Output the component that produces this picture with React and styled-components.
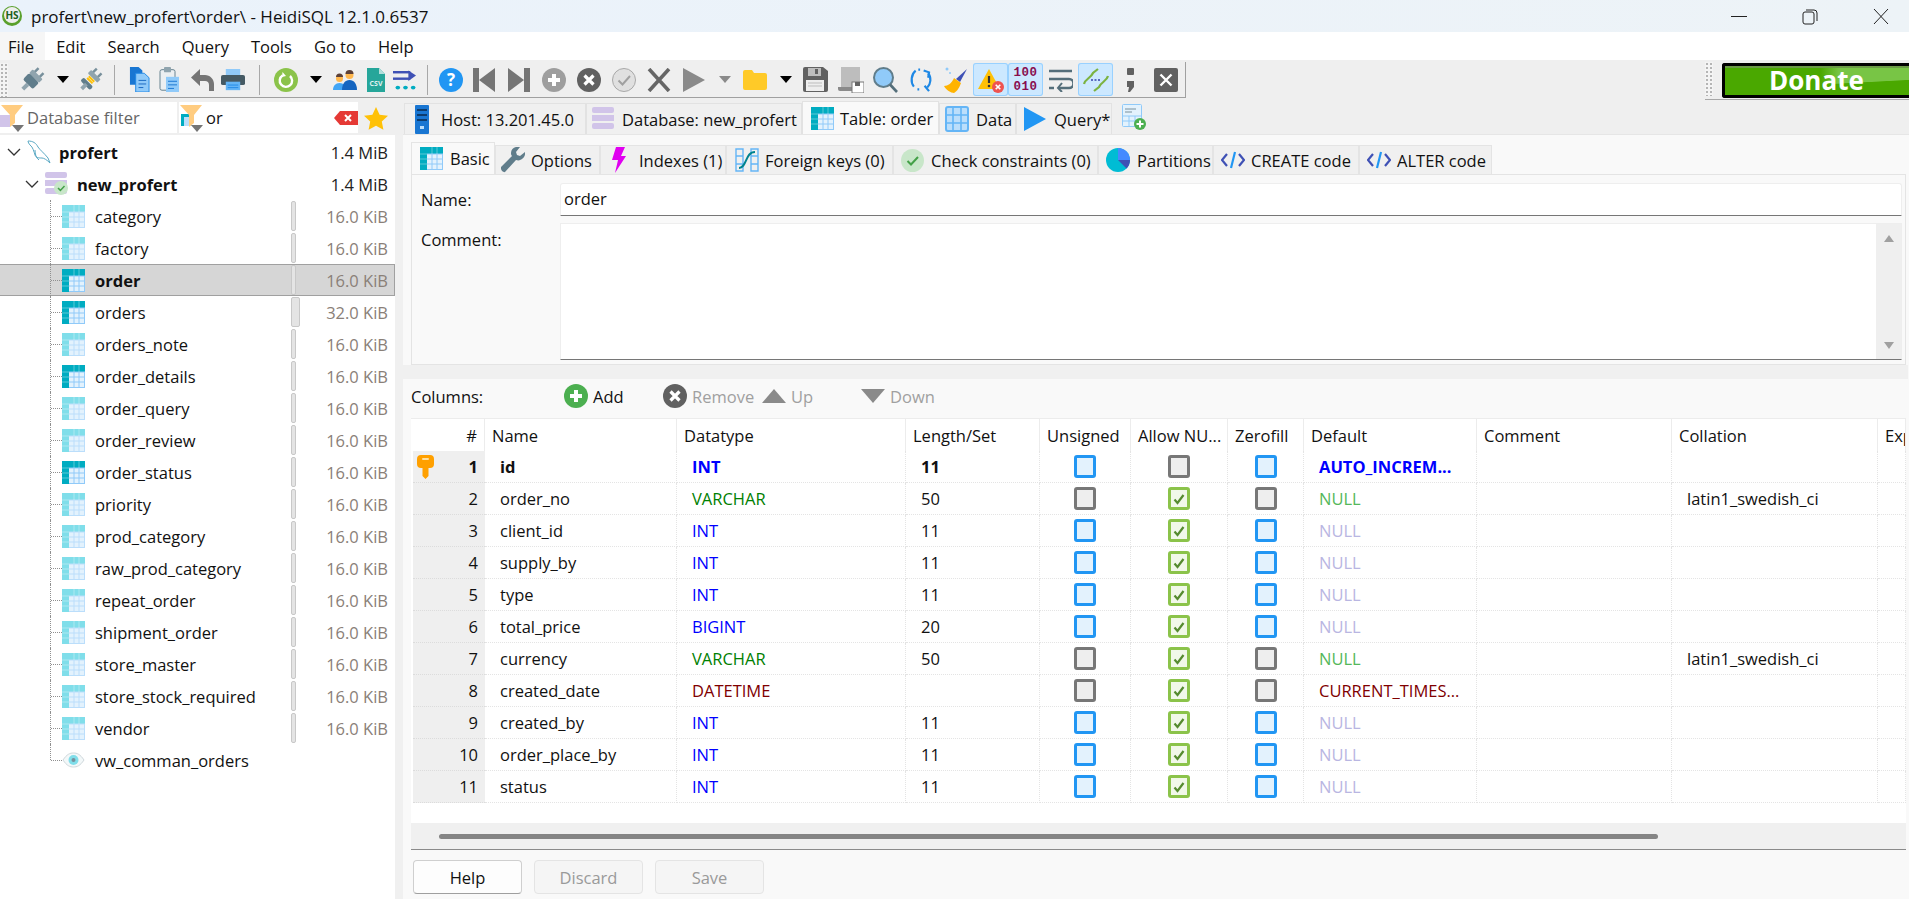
import React from 'react';
import styled, { createGlobalStyle } from 'styled-components';

const FONT = '"Open Sans", "Noto Sans", "Liberation Sans", sans-serif';

const GlobalStyle = createGlobalStyle`
  html, body {
    margin: 0;
    padding: 0;
    background: #f0f0f0;
    overflow: hidden;
  }
  * {
    box-sizing: border-box;
  }
`;

const Window = styled.div`
  width: 1909px;
  height: 899px;
  display: flex;
  flex-direction: column;
  overflow: hidden;
  font-family: ${FONT};
  font-size: 16.5px;
  color: #111;
`;

const TitleBar = styled.div`
  height: 32px;
  flex: none;
  display: flex;
  align-items: center;
  padding-left: 2px;
  gap: 9px;
  background: linear-gradient(90deg, #eaf2fb, #edf3f7);
  font-size: 17px;
`;

const TitleText = styled.span`
  flex: 1;
`;

const WinButtons = styled.div`
  display: flex;
  align-items: center;
  gap: 55px;
  padding-right: 20px;
`;

const MenuBar = styled.div`
  height: 28px;
  flex: none;
  display: flex;
  background: #fff;
`;

const MenuItem = styled.div`
  padding: 0 11px 0 ${p => (p.$first ? '8px' : '11px')};
  display: flex;
  align-items: center;
  background: ${p => (p.$first ? '#f6f6f6' : 'transparent')};
`;

const ToolArea = styled.div`
  height: 40px;
  flex: none;
  display: flex;
  justify-content: space-between;
  padding-top: 2px;
  background: #efefef;
`;

const ToolBar = styled.div`
  width: 1186px;
  height: 36px;
  display: flex;
  align-items: center;
  border-right: 1px solid #a0a0a0;
  border-bottom: 1px solid #a0a0a0;
`;

const Grip = styled.div`
  width: ${p => p.$w || 16}px;
  height: 34px;
  flex: none;
  background-color: #f4f4f4;
  background-image: radial-gradient(#b5b5b5 0.8px, transparent 1px);
  background-size: 4px 4px;
  background-repeat: repeat;
  background-clip: content-box;
  padding-right: ${p => (p.$w ? 9 : 8)}px;
`;

const ToolButton = styled.div`
  width: ${p => p.$w || 35}px;
  height: 33px;
  flex: none;
  display: flex;
  align-items: center;
  justify-content: center;
  border-radius: 3px;
  background: ${p => (p.$active ? '#cce8ff' : 'transparent')};
  box-shadow: ${p => (p.$active ? 'inset 0 0 0 1px #99d1ff' : 'none')};
`;

const ToolSep = styled.div`
  width: ${p => p.$w}px;
  height: 30px;
  flex: none;
  display: flex;
  justify-content: center;
  &::after {
    content: '';
    width: 1px;
    background: #a8a8a8;
  }
`;

const DropArrow = styled.div`
  width: 0;
  height: 0;
  border-left: 6px solid transparent;
  border-right: 6px solid transparent;
  border-top: 7px solid ${p => p.$color || '#000'};
`;

const DonateWrap = styled.div`
  width: 204px;
  height: 38px;
  display: flex;
  border-bottom: 1px solid #a8a8a8;
`;

const DonateButton = styled.div`
  flex: 1;
  height: 35px;
  margin-top: 1px;
  border: 3px solid #000;
  border-right: none;
  border-radius: 3px 0 0 3px;
  display: flex;
  align-items: center;
  padding: 0 0 2px 44px;
  color: #fff;
  font-size: 26px;
  font-weight: 700;
  background:
    linear-gradient(177deg, transparent 60%, #4aa800 62%),
    linear-gradient(90deg, #4aa800 52%, #78c545 62%);
  box-shadow: inset 0 2px 0 #6a9a45;
`;

const Body = styled.div`
  flex: 1;
  display: flex;
  min-height: 0;
`;

const LeftPane = styled.div`
  width: 403px;
  flex: none;
  display: flex;
  flex-direction: column;
`;

const FilterBar = styled.div`
  height: 35px;
  flex: none;
  display: flex;
  gap: 2px;
  padding-top: 2px;
  background: #efefef;
`;

const FilterField = styled.div`
  width: ${p => p.$w}px;
  height: 31px;
  flex: none;
  display: flex;
  align-items: center;
  background: #fff;
  color: ${p => (p.$muted ? '#666' : '#111')};
`;

const FilterIcon = styled.div`
  width: 27px;
  flex: none;
  display: flex;
`;

const FilterText = styled.span`
  flex: 1;
`;

const StarBox = styled.div`
  width: 32px;
  display: flex;
  align-items: center;
  justify-content: center;
`;

const TreeWrap = styled.div`
  flex: 1;
  display: flex;
  background: #fff;
  min-height: 0;
`;

const Tree = styled.div`
  width: 395px;
  flex: none;
  padding-top: 1px;
`;

const TreeStrip = styled.div`
  flex: 1;
  background: #f0f0f0;
`;

const TreeRow = styled.div`
  position: relative;
  height: 32px;
  display: flex;
  align-items: center;
  padding-left: ${p => p.$indent}px;
  padding-right: 7px;
  font-weight: ${p => (p.$bold ? 700 : 400)};
  background: ${p => (p.$selected ? '#d6d6d6' : 'transparent')};
  box-shadow: ${p => (p.$selected ? 'inset 0 1px #a0a0a0, inset 0 -1px #a0a0a0, inset -1px 0 #a0a0a0' : 'none')};

  /* dotted connector of the tree */
  ${p => p.$leaf && `
    &::before {
      content: '';
      position: absolute;
      left: 50px;
      top: 0;
      height: ${p.$last ? '16px' : '32px'};
      width: 12px;
      border-left: 1px dotted #909090;
    }
    &::after {
      content: '';
      position: absolute;
      left: 51px;
      top: 16px;
      width: 11px;
      border-top: 1px dotted #909090;
    }
  `}
`;

const Chevron = styled.svg`
  width: 14px;
  height: 14px;
  flex: none;
  margin-right: 6px;
`;

const TreeIcon = styled.div`
  width: ${p => p.$w || 23}px;
  height: 24px;
  flex: none;
  display: flex;
  align-items: center;
  margin-right: ${p => p.$mr || 10}px;
`;

const TreeName = styled.span`
  flex: 1;
`;

const SizeBar = styled.div`
  width: ${p => (p.$wide ? 9 : 5)}px;
  height: 30px;
  flex: none;
  margin-right: ${p => (p.$wide ? 0 : 4)}px;
  border-radius: 2px;
  background: #e4e4e4;
  border: 1px solid #c8c8c8;
`;

const TreeSize = styled.span`
  width: 88px;
  flex: none;
  text-align: right;
  font-weight: 400;
  color: ${p => (p.$dark ? '#222' : '#8a8078')};
`;

const RightPane = styled.div`
  flex: 1;
  display: flex;
  flex-direction: column;
  min-width: 0;
`;

const MainTabs = styled.div`
  height: 35px;
  flex: none;
  display: flex;
  align-items: flex-end;
  padding-left: 1px;
  background: #efefef;
  border-bottom: 1px solid #e6e6e6;
`;

const MainTab = styled.div`
  width: ${p => p.$w}px;
  height: ${p => (p.$active ? 33 : 31)}px;
  flex: none;
  display: flex;
  align-items: center;
  gap: ${p => p.$gap || 6}px;
  padding-left: ${p => p.$pl || 8}px;
  background: ${p => (p.$active ? '#f9f9f9' : '#f0f0f0')};
  border: 1px solid #e2e2e2;
  border-bottom: none;
  white-space: nowrap;
`;

const AddTab = styled.div`
  margin: 0 0 4px 10px;
  display: flex;
`;

const Content = styled.div`
  flex: 1;
  display: flex;
  flex-direction: column;
  min-height: 0;
  padding: 0 3px 0 8px;
  background: #f9f9f9;
`;

const SubTabs = styled.div`
  height: 39px;
  flex: none;
  display: flex;
  align-items: flex-end;
  padding-top: 7px;
`;

const SubTab = styled.div`
  width: ${p => p.$w}px;
  height: ${p => (p.$active ? 32 : 29)}px;
  flex: none;
  display: flex;
  align-items: center;
  gap: ${p => p.$gap || 6}px;
  padding-left: ${p => p.$pl || 7}px;
  background: ${p => (p.$active ? '#f9f9f9' : '#f0f0f0')};
  border: 1px solid #e4e4e4;
  border-bottom: none;
  white-space: nowrap;
`;

const TabPage = styled.div`
  height: 191px;
  flex: none;
  padding: 8px 3px 0 9px;
  border: 1px solid #e4e4e4;
  display: flex;
  flex-direction: column;
  gap: 7px;
`;

const FormRow = styled.div`
  display: flex;
`;

const FormLabel = styled.label`
  width: 139px;
  flex: none;
  padding-top: ${p => p.$pt || 5}px;
`;

const NameInput = styled.div`
  flex: 1;
  height: 33px;
  padding: 3px 3px;
  background: #fff;
  border: 1px solid #eeeeee;
  border-bottom: 1px solid #767676;
  border-radius: 3px 3px 0 0;
`;

const Memo = styled.div`
  flex: 1;
  height: 137px;
  display: flex;
  justify-content: flex-end;
  background: #fff;
  border: 1px solid #eeeeee;
  border-bottom: 1px solid #767676;
`;

const MemoScroll = styled.div`
  width: 25px;
  display: flex;
  flex-direction: column;
  justify-content: space-between;
  align-items: center;
  padding: 11px 0 10px;
  background: #efefef;
`;

const Arrow = styled.div`
  width: 0;
  height: 0;
  border-left: ${p => p.$s || 6}px solid transparent;
  border-right: ${p => p.$s || 6}px solid transparent;
  ${p => (p.$up ? 'border-bottom' : 'border-top')}: ${p => p.$h || 8}px solid ${p => p.$color || '#a0a0a0'};
`;

const Splitter = styled.div`
  height: 14px;
  flex: none;
  margin: 0 -2px 0 -8px;
  background: #f0f0f0;
`;

const ColumnsBar = styled.div`
  height: 39px;
  flex: none;
  display: flex;
  align-items: center;
  padding-bottom: 5px;
`;

const ColumnsLabel = styled.span`
  width: 153px;
  flex: none;
`;

const ColAction = styled.div`
  width: ${p => p.$w}px;
  flex: none;
  display: flex;
  align-items: center;
  gap: 5px;
  color: ${p => (p.$off ? '#a0a0a0' : '#111')};
`;

const Grid = styled.div`
  height: 432px;
  flex: none;
  display: flex;
  flex-direction: column;
  overflow: hidden;
  background: #fff;
  border-top: 1px solid #ececec;
`;

const COLS = '74px 192px 229px 134px 91px 97px 76px 173px 195px 206px 28px';

const HeadRow = styled.div`
  height: 32px;
  flex: none;
  display: grid;
  grid-template-columns: ${COLS};
`;

const HeadCell = styled.div`
  display: flex;
  align-items: center;
  justify-content: ${p => (p.$end ? 'flex-end' : 'flex-start')};
  padding: 0 ${p => (p.$end ? '7px' : '0')} 0 ${p => (p.$end ? '0' : '7px')};
  border-right: 1px solid #ececec;
  white-space: nowrap;
  overflow: hidden;
`;

const DataRow = styled.div`
  height: 32px;
  flex: none;
  display: grid;
  grid-template-columns: ${COLS};
  font-weight: ${p => (p.$bold ? 700 : 400)};
`;

const Gutter = styled.div`
  position: relative;
  display: flex;
  align-items: center;
  justify-content: flex-end;
  padding-right: 7px;
  margin-left: 2px;
  background: #efefef;
  border-bottom: 1px dotted #dcdcdc;
`;

const KeyBadge = styled.div`
  position: absolute;
  left: 4px;
  top: 4px;
  display: flex;
`;

const Cell = styled.div`
  display: flex;
  align-items: center;
  justify-content: ${p => (p.$center ? 'center' : 'flex-start')};
  padding-left: ${p => (p.$center ? 0 : 15)}px;
  color: ${p => p.$color || 'inherit'};
  border-right: 1px dotted #e4e4e4;
  border-bottom: 1px dotted #e4e4e4;
  white-space: nowrap;
`;

const CheckBox = styled.div`
  width: 22px;
  height: 23px;
  display: flex;
  align-items: center;
  justify-content: center;
  border-radius: 3px;
  border: 3px solid ${p => ({ blue: '#2196f3', gray: '#777', green: '#8bc34a' }[p.$tone])};
  background: ${p => ({ blue: '#e3f2fd', gray: '#eeeeee', green: '#f1f8e9' }[p.$tone])};
`;

const HScroll = styled.div`
  height: 27px;
  flex: none;
  margin-top: auto;
  display: flex;
  align-items: center;
  padding-left: 28px;
  background: #f0f0f0;
  border-bottom: 1px solid #8a8a8a;
`;

const HThumb = styled.div`
  width: 1219px;
  height: 5px;
  border-radius: 3px;
  background: #858585;
`;

const Footer = styled.div`
  flex: 1;
  display: flex;
  gap: 12px;
  padding: 10px 0 0 2px;
`;

const FootButton = styled.div`
  width: 109px;
  height: 34px;
  display: flex;
  align-items: center;
  justify-content: center;
  border-radius: 4px;
  background: ${p => (p.$off ? '#f5f5f5' : '#fdfdfd')};
  border: 1px solid ${p => (p.$off ? '#e4e4e4' : '#cfcfcf')};
  border-bottom-color: ${p => (p.$off ? '#e4e4e4' : '#9f9f9f')};
  color: ${p => (p.$off ? '#9a9a9a' : '#111')};
`;

/* ---------- icons ---------- */

function TableIcon({ tone = 'dark', size = 23 }) {
  const head = tone === 'dark' ? '#00acc1' : '#80deea';
  const line = tone === 'dark' ? '#90caf9' : '#bbdefb';
  return (
    <svg width={size} height={size} viewBox="0 0 23 23">
      <rect x="0.5" y="0.5" width="22" height="22" fill="#e3f2fd" stroke={line} />
      <rect x="0" y="0" width="23" height="7" fill={head} />
      <rect x="0" y="0" width="7" height="23" fill={head} />
      <path d="M7 7H23M7 12H23M7 17H23M12 7V23M17 7V23" stroke={line} strokeWidth="1" fill="none" />
      <path d="M0 7H7M0 12H7M0 17H7M12 0V7M17 0V7" stroke="#ffffff" strokeOpacity="0.35" strokeWidth="1" />
    </svg>
  );
}

function DataIcon() {
  return (
    <svg width="24" height="26" viewBox="0 0 24 26">
      <rect x="1" y="1" width="22" height="24" rx="2" fill="#bbdefb" stroke="#64b5f6" strokeWidth="2" />
      <path d="M1 9H23M1 17H23M8 1V25M16 1V25" stroke="#64b5f6" strokeWidth="1.6" />
    </svg>
  );
}

function Play({ color = '#2196f3', w = 24, h = 26 }) {
  return (
    <svg width={w} height={h} viewBox="0 0 24 26">
      <path d="M1 1L23 13L1 25Z" fill={color} />
    </svg>
  );
}

function HostIcon() {
  return (
    <svg width="14" height="29" viewBox="0 0 14 29">
      <rect width="14" height="29" rx="1" fill="#1976d2" />
      <path d="M2 5H12M2 10H12M2 15H12" stroke="#0d3c6e" strokeWidth="2" />
      <rect x="5" y="21" width="4" height="3" fill="#bbdefb" />
    </svg>
  );
}

function DbIcon({ ok }) {
  return (
    <svg width="24" height="24" viewBox="0 0 24 24">
      <rect x="0" y="0" width="22" height="6" rx="2" fill="#d1c4e9" />
      <rect x="0" y="8" width="22" height="6" fill="#d1c4e9" />
      <rect x="0" y="16" width="22" height="6" rx="2" fill="#d1c4e9" />
      {ok && <circle cx="16" cy="16" r="7" fill="#c8e6c9" />}
      {ok && <path d="M13 16l2.4 2.4L19.5 14" stroke="#43a047" strokeWidth="1.5" fill="none" />}
    </svg>
  );
}

function Dolphin() {
  return (
    <svg width="24" height="24" viewBox="0 0 24 24" fill="none" stroke="#5aa9c4" strokeWidth="1">
      <path d="M1 1c5 0 8 2 10 6 2 3 6 6 10 11l2 5c-3-3-6-5-8-5-3 0-6 0-7-3C7 12 6 7 3 5 2 4 1 2 1 1z" />
      <path d="M8 10c0 4 1 8 4 10" />
    </svg>
  );
}

function EyeIcon() {
  return (
    <svg width="23" height="16" viewBox="0 0 23 16">
      <path d="M1 8C5 2 8 1 11.5 1S18 2 22 8c-4 6-7 7-10.5 7S5 14 1 8z" fill="#f3f8f9" stroke="#cfd8dc" />
      <circle cx="11.5" cy="8" r="5" fill="#80deea" />
      <circle cx="11.5" cy="8" r="2" fill="#78909c" />
    </svg>
  );
}

function Key() {
  return (
    <svg width="17" height="24" viewBox="0 0 17 24">
      <path d="M4 0H13a4 4 0 0 1 4 4V9a4 4 0 0 1-4 4H11.5V21L8.5 24 5.5 21V13H4A4 4 0 0 1 0 9V4a4 4 0 0 1 4-4z" fill="#ffa000" />
      <rect x="5" y="3" width="7" height="2" rx="1" fill="#ffe0a0" />
    </svg>
  );
}

function Funnel({ inner }) {
  return (
    <svg width="27" height="28" viewBox="0 0 27 28">
      {inner === 'db' && <rect x="0" y="11" width="10" height="12" fill="#d1c4e9" />}
      {inner === 'table' && <g><rect x="2" y="10" width="11" height="12" fill="#bbdefb" /><rect x="2" y="10" width="11" height="3" fill="#00acc1" /><rect x="2" y="10" width="3" height="12" fill="#00acc1" /></g>}
      <path d="M1 1H23L15 11V19L10 23V11Z" fill="#ffcc80" />
      <path d="M12 21H24L18 28Z" fill="#757575" />
    </svg>
  );
}

function CircleIcon({ color, kind, size = 24 }) {
  return (
    <svg width={size} height={size} viewBox="0 0 24 24">
      <circle cx="12" cy="12" r="12" fill={color} />
      {kind === 'plus' && <path d="M12 6v12M6 12h12" stroke="#fff" strokeWidth="4" />}
      {kind === 'x' && <path d="M7.5 7.5l9 9M16.5 7.5l-9 9" stroke="#fff" strokeWidth="3.2" />}
    </svg>
  );
}

function PlugIcon({ accent }) {
  return (
    <svg width="26" height="26" viewBox="0 0 26 26">
      <g transform="rotate(45 13 13)">
        <rect x="8" y="0" width="2.5" height="6" fill="#78909c" />
        <rect x="15" y="0" width="2.5" height="6" fill="#78909c" />
        <rect x="6" y="5" width="14" height="5" rx="1" fill="#90a4ae" />
        {accent && <path d="M9 11.5h8M9 14h8" stroke="#ffc107" strokeWidth="2" />}
        <rect x="6" y={accent ? 16 : 10} width="14" height={accent ? 5 : 9} rx="2" fill="#607d8b" />
        <rect x="11" y="19" width="4" height="7" fill="#90a4ae" />
      </g>
    </svg>
  );
}

function DocsIcon() {
  return (
    <svg width="21" height="25" viewBox="0 0 22 28" preserveAspectRatio="none">
      <path d="M1 0H10L14 4V20H1Z" fill="#1976d2" />
      <path d="M7 7H16L21 12V28H7Z" fill="#90caf9" stroke="#1e88e5" />
      <path d="M10 15H18M10 19H18M10 23H15" stroke="#1565c0" />
    </svg>
  );
}

function PasteIcon() {
  return (
    <svg width="20" height="25" viewBox="0 0 20 28" preserveAspectRatio="none">
      <rect x="1" y="3" width="15" height="23" rx="2" fill="#eceff1" stroke="#607d8b" />
      <rect x="5" y="0" width="7" height="6" rx="1" fill="#90a4ae" />
      <rect x="7" y="11" width="13" height="17" fill="#90caf9" />
      <path d="M9 16H18M9 20H18M9 24H15" stroke="#1976d2" />
    </svg>
  );
}

function UndoIcon() {
  return (
    <svg width="24" height="24" viewBox="0 0 24 24">
      <path d="M10 1L1 9.5 10 18V13H15C17.5 13 19 14.5 19 17V23H24V16C24 11 20 7 15 7H10Z" fill="#757575" />
    </svg>
  );
}

function PrintIcon() {
  return (
    <svg width="24" height="22" viewBox="0 0 25 26" preserveAspectRatio="none">
      <rect x="5" y="0" width="15" height="8" fill="#90caf9" />
      <rect x="0" y="7" width="25" height="12" rx="2" fill="#455a64" />
      <rect x="5" y="15" width="15" height="10" fill="#64b5f6" />
      <path d="M7 19H18M7 22H18" stroke="#1e88e5" />
    </svg>
  );
}

function RefreshIcon() {
  return (
    <svg width="24" height="24" viewBox="0 0 24 24">
      <circle cx="12" cy="12" r="12" fill="#8bc34a" />
      <path d="M8.5 7.5A6.2 6.2 0 1 0 16 8" stroke="#fff" strokeWidth="2.4" fill="none" />
      <path d="M12 8l-4 1 .5-5z" fill="#fff" />
    </svg>
  );
}

function UsersIcon() {
  return (
    <svg width="24" height="20" viewBox="0 0 24 20">
      <circle cx="6.5" cy="8.5" r="3.5" fill="#ffb74d" />
      <path d="M3 7a3.5 3.5 0 0 1 7 0z" fill="#5d4037" />
      <path d="M0 20c0-4 2.5-7 6.5-7s6.5 3 6.5 7z" fill="#42a5f5" />
      <circle cx="16.5" cy="5" r="4" fill="#ffb74d" />
      <path d="M12.5 4a4 4 0 0 1 8 0z" fill="#5d4037" />
      <path d="M9 20c0-6 3-10 7.5-10S24 14 24 20z" fill="#1565c0" />
    </svg>
  );
}

function CsvIcon() {
  return (
    <svg width="18" height="24" viewBox="0 0 18 24">
      <path d="M0 0H12L18 6V24H0Z" fill="#26a69a" />
      <path d="M12 0L18 6H12Z" fill="#b2dfdb" />
      <text x="9" y="18" fontSize="7" fontWeight="700" fontFamily={FONT} textAnchor="middle" fill="#e0f2f1">CSV</text>
    </svg>
  );
}

function ExportIcon() {
  return (
    <svg width="24" height="21" viewBox="0 0 25 26" preserveAspectRatio="none">
      <path d="M0 4H18" stroke="#3f51b5" strokeWidth="3" />
      <path d="M0 12H18" stroke="#3f51b5" strokeWidth="3" />
      <path d="M16 2L24 8 16 15Z" fill="#3f51b5" />
      <circle cx="5" cy="23" r="2.4" fill="#00acc1" />
      <circle cx="13" cy="23" r="2.4" fill="#00acc1" />
      <circle cx="21" cy="23" r="2.4" fill="#00acc1" />
    </svg>
  );
}

function HelpIcon() {
  return (
    <svg width="24" height="24" viewBox="0 0 24 24">
      <circle cx="12" cy="12" r="12" fill="#2196f3" />
      <text x="12" y="18" fontSize="17" fontWeight="700" fontFamily={FONT} textAnchor="middle" fill="#fff">?</text>
    </svg>
  );
}

function SkipIcon({ last }) {
  return (
    <svg width="22" height="24" viewBox="0 0 22 24">
      {last
        ? <path d="M0 0L16 12 0 24ZM16 0H22V24H16Z" fill="#757575" />
        : <path d="M0 0H6V24H0ZM22 0V24L6 12Z" fill="#757575" />}
    </svg>
  );
}

function CheckDisc() {
  return (
    <svg width="24" height="24" viewBox="0 0 24 24">
      <circle cx="12" cy="12" r="11.5" fill="#e0e0e0" stroke="#a8a8a8" />
      <path d="M6.5 12.5l4 4L18 8" stroke="#a0a0a0" strokeWidth="2" fill="none" />
    </svg>
  );
}

function BigX() {
  return (
    <svg width="24" height="24" viewBox="0 0 24 24">
      <path d="M2 1l20 22M22 1L2 23" stroke="#666" strokeWidth="3.6" />
    </svg>
  );
}

function FolderIcon() {
  return (
    <svg width="24" height="20" viewBox="0 0 24 20">
      <path d="M2 0H9L11 3H22a2 2 0 0 1 2 2V18a2 2 0 0 1-2 2H2a2 2 0 0 1-2-2V2a2 2 0 0 1 2-2z" fill="#ffca28" />
    </svg>
  );
}

function SaveIcon() {
  return (
    <svg width="25" height="25" viewBox="0 0 25 25">
      <path d="M2 0H20L25 4V23a2 2 0 0 1-2 2H2a2 2 0 0 1-2-2V2a2 2 0 0 1 2-2z" fill="#616161" />
      <rect x="5" y="1" width="13" height="8" fill="#bdbdbd" />
      <rect x="12" y="2" width="3" height="5" fill="#616161" />
      <rect x="3" y="13" width="18" height="11" fill="#eeeeee" />
      <path d="M5 16H19M5 19H19" stroke="#bdbdbd" />
    </svg>
  );
}

function SaveFileIcon() {
  return (
    <svg width="26" height="26" viewBox="0 0 26 26">
      <rect x="3" y="0" width="19" height="20" fill="#bdbdbd" />
      <path d="M0 20H14V24H2a2 2 0 0 1-2-2z" fill="#8a8a8a" />
      <rect x="14" y="15" width="12" height="11" fill="#fff" stroke="#777" />
      <rect x="17" y="15" width="5" height="4" fill="#666" />
    </svg>
  );
}

function SearchIcon() {
  return (
    <svg width="25" height="26" viewBox="0 0 25 26">
      <circle cx="10.5" cy="10.5" r="9.5" fill="#90caf9" stroke="#607d8b" strokeWidth="2" />
      <path d="M17 17.5L24 25" stroke="#546e7a" strokeWidth="2.6" />
    </svg>
  );
}

function ReplaceIcon() {
  return (
    <svg width="24" height="25" viewBox="0 0 24 28" fill="none" stroke="#1e88e5" strokeWidth="2.4">
      <path d="M6 4C1 8 0 17 4 22" />
      <path d="M8 25h3M9 3h3" strokeDasharray="2 1.5" />
      <path d="M15 4l6 2-1 6" />
      <path d="M20 7c4 5 3 12-1 16" />
      <path d="M16 21l5 6" />
    </svg>
  );
}

function BroomIcon() {
  return (
    <svg width="26" height="28" viewBox="0 0 26 28">
      <path d="M24 3L17 16l-4-3z" fill="#3f51b5" />
      <path d="M11 12l7 5c-2 6-5 9-7 10-3 0-8-3-10-7 4 0 8-3 10-8z" fill="#ffb300" />
      <circle cx="4" cy="3" r="1.5" fill="#90caf9" />
      <circle cx="7" cy="7" r="1" fill="#90caf9" />
    </svg>
  );
}

function WarnIcon() {
  return (
    <svg width="26" height="26" viewBox="0 0 26 26">
      <path d="M11 2L22 22H0Z" fill="#ffc107" />
      <path d="M11 9v7" stroke="#333" strokeWidth="2.2" />
      <circle cx="11" cy="19" r="1.3" fill="#333" />
      <circle cx="20" cy="20" r="6" fill="#ef5350" />
      <path d="M17.7 17.7l4.6 4.6M22.3 17.7l-4.6 4.6" stroke="#fff" strokeWidth="1.6" />
    </svg>
  );
}

const BinaryBox = styled.div`
  font-family: "Liberation Mono", monospace;
  font-size: 12.5px;
  font-weight: 700;
  line-height: 14px;
  letter-spacing: 0.5px;
  text-align: center;
  color: #880e4f;
`;

function WrapIcon() {
  return (
    <svg width="24" height="24" viewBox="0 0 24 24" fill="none" stroke="#546e7a" strokeWidth="2.6">
      <path d="M0 3H23M0 11H20a3 3 0 0 1 0 9H10M0 20H5" />
      <path d="M13 15l-4 5 4 4" strokeWidth="2" />
    </svg>
  );
}

function SyncIcon() {
  return (
    <svg width="26" height="26" viewBox="0 0 26 26" fill="none">
      <path d="M1 17C2 12 8 11 10 6L15 2" stroke="#7cb342" strokeWidth="2.2" />
      <path d="M25 9C24 14 18 15 16 20L11 24" stroke="#7cb342" strokeWidth="2.2" />
      <path d="M8 13h10" stroke="#5c6bc0" strokeWidth="2.2" strokeDasharray="2 1.5" />
    </svg>
  );
}

function SemiIcon() {
  return (
    <svg width="9" height="24" viewBox="0 0 9 24">
      <rect x="1" y="0" width="7" height="7" rx="1" fill="#616161" />
      <path d="M1 13H8V19L4 24H2L3 19H1Z" fill="#616161" />
    </svg>
  );
}

function BoxX() {
  return (
    <svg width="24" height="24" viewBox="0 0 24 24">
      <rect width="24" height="24" rx="2" fill="#616161" />
      <path d="M6.5 6.5l11 11M17.5 6.5l-11 11" stroke="#fff" strokeWidth="2.4" />
    </svg>
  );
}

function WrenchIcon() {
  return (
    <svg width="24" height="26" viewBox="0 0 24 26">
      <path d="M24 5l-5 4-3-1-1-3 4-5c-4-1-9 1-9 6 0 1 0 2 1 3L0 20c-1 2 2 6 4 5L15 13c5 2 10-3 9-8z" fill="#607d8b" />
    </svg>
  );
}

function BoltIcon() {
  return (
    <svg width="14" height="26" viewBox="0 0 14 26">
      <path d="M4 0H13L9 9H14L3 26 6 13H0Z" fill="#e000f0" />
    </svg>
  );
}

function ForeignIcon() {
  return (
    <svg width="24" height="24" viewBox="0 0 24 24" fill="none">
      <path d="M1 1H8V23H1ZM16 1H23V23H16ZM1 8H8M1 16H8M16 8H23M16 16H23" stroke="#64b5f6" strokeWidth="1.4" />
      <path d="M4 20C12 20 10 4 20 4" stroke="#00838f" strokeWidth="2" />
    </svg>
  );
}

function CheckCircle() {
  return (
    <svg width="23" height="23" viewBox="0 0 23 23">
      <circle cx="11.5" cy="11.5" r="11.5" fill="#c8e6c9" />
      <path d="M6.5 12l3.5 3.5 7-7.5" stroke="#43a047" strokeWidth="2" fill="none" />
    </svg>
  );
}

function PieIcon() {
  return (
    <svg width="24" height="24" viewBox="0 0 24 24">
      <circle cx="12" cy="12" r="12" fill="#00bcd4" />
      <path d="M12 12V0A12 12 0 0 1 24 12Z" fill="#448aff" />
      <path d="M12 12H24A12 12 0 0 1 20.5 20.5Z" fill="#3f51b5" />
    </svg>
  );
}

function CodeIcon() {
  return (
    <svg width="24" height="20" viewBox="0 0 24 20" fill="none" strokeWidth="2.2">
      <path d="M6 4L1 10l5 6M18 4l5 6-5 6" stroke="#3f51b5" />
      <path d="M14 2L10 18" stroke="#2196f3" />
    </svg>
  );
}

function NewQueryIcon() {
  return (
    <svg width="24" height="26" viewBox="0 0 24 26">
      <rect x="0.5" y="0.5" width="19" height="22" rx="1" fill="#e3f2fd" stroke="#90caf9" />
      <path d="M3 5H14M3 8H10" stroke="#78909c" />
      <path d="M0 12H20M0 17H20M7 12V23M13 12V23" stroke="#90caf9" />
      <circle cx="18" cy="20" r="6" fill="#4caf50" />
      <path d="M18 16.5v7M14.5 20h7" stroke="#fff" strokeWidth="2" />
    </svg>
  );
}

function TreeChevron() {
  return (
    <Chevron viewBox="0 0 14 14">
      <path d="M1 4l6 6 6-6" stroke="#333" strokeWidth="1.3" fill="none" />
    </Chevron>
  );
}

const TOOLS = [
  { w: 32, icon: <PlugIcon /> },
  { w: 30, icon: <DropArrow /> },
  { w: 25, icon: <PlugIcon accent /> },
  { sep: 22 },
  { w: 28, icon: <DocsIcon /> },
  { w: 32, icon: <PasteIcon /> },
  { w: 34, icon: <UndoIcon /> },
  { w: 28, icon: <PrintIcon /> },
  { sep: 24 },
  { w: 30, icon: <RefreshIcon /> },
  { w: 29, icon: <DropArrow /> },
  { w: 30, icon: <UsersIcon /> },
  { w: 31, icon: <CsvIcon /> },
  { w: 27, icon: <ExportIcon /> },
  { sep: 18 },
  { w: 30, icon: <HelpIcon /> },
  { icon: <SkipIcon /> },
  { icon: <SkipIcon last /> },
  { icon: <CircleIcon color="#9e9e9e" kind="plus" /> },
  { icon: <CircleIcon color="#616161" kind="x" /> },
  { icon: <CheckDisc /> },
  { icon: <BigX /> },
  { w: 36, icon: <Play color="#8a8a8a" /> },
  { w: 25, icon: <DropArrow $color="#8a8a8a" /> },
  { w: 36, icon: <FolderIcon /> },
  { w: 25, icon: <DropArrow /> },
  { icon: <SaveIcon /> },
  { icon: <SaveFileIcon /> },
  { icon: <SearchIcon /> },
  { icon: <ReplaceIcon /> },
  { icon: <BroomIcon /> },
  { active: true, icon: <WarnIcon /> },
  { active: true, icon: <BinaryBox>100<br />010</BinaryBox> },
  { icon: <WrapIcon /> },
  { active: true, icon: <SyncIcon /> },
  { icon: <SemiIcon /> },
  { icon: <BoxX /> },
];

const MENU = ['File', 'Edit', 'Search', 'Query', 'Tools', 'Go to', 'Help'];

const TABLES = [
  { name: 'category', tone: 'light' },
  { name: 'factory', tone: 'light' },
  { name: 'order', tone: 'dark', selected: true },
  { name: 'orders', tone: 'dark', size: '32.0 KiB' },
  { name: 'orders_note', tone: 'light' },
  { name: 'order_details', tone: 'dark' },
  { name: 'order_query', tone: 'light' },
  { name: 'order_review', tone: 'light' },
  { name: 'order_status', tone: 'dark' },
  { name: 'priority', tone: 'light' },
  { name: 'prod_category', tone: 'light' },
  { name: 'raw_prod_category', tone: 'light' },
  { name: 'repeat_order', tone: 'light' },
  { name: 'shipment_order', tone: 'light' },
  { name: 'store_master', tone: 'light' },
  { name: 'store_stock_required', tone: 'light' },
  { name: 'vendor', tone: 'light' },
];

const HEADERS = ['Name', 'Datatype', 'Length/Set', 'Unsigned', 'Allow NU...', 'Zerofill', 'Default', 'Comment', 'Collation', 'Exp'];

const TYPE_COLORS = { INT: '#0000ff', BIGINT: '#0000ff', VARCHAR: '#008000', DATETIME: '#800000' };

const nullGreen = { text: 'NULL', color: '#55b85a' };
const nullPurple = { text: 'NULL', color: '#b9b6e2' };

function intRow(name, type = 'INT', len = '11') {
  return { name, type, len, boxes: ['blue', 'green', 'blue'], def: nullPurple };
}

function charRow(name) {
  return { name, type: 'VARCHAR', len: '50', boxes: ['gray', 'green', 'gray'], def: nullGreen, coll: 'latin1_swedish_ci' };
}

const ROWS = [
  { name: 'id', type: 'INT', len: '11', boxes: ['blue', 'gray', 'blue'], def: { text: 'AUTO_INCREM...', color: '#0000ff' }, bold: true },
  charRow('order_no'),
  intRow('client_id'),
  intRow('supply_by'),
  intRow('type'),
  intRow('total_price', 'BIGINT', '20'),
  charRow('currency'),
  { name: 'created_date', type: 'DATETIME', len: '', boxes: ['gray', 'green', 'gray'], def: { text: 'CURRENT_TIMES...', color: '#800000' } },
  intRow('created_by'),
  intRow('order_place_by'),
  intRow('status'),
];

function Box({ tone }) {
  return (
    <CheckBox $tone={tone}>
      {tone === 'green' && (
        <svg width="12" height="12" viewBox="0 0 12 12">
          <path d="M1.5 6.5l3 3.5L10.5 2" stroke="#558b2f" strokeWidth="2.2" fill="none" />
        </svg>
      )}
    </CheckBox>
  );
}

function App() {
  return (
    <Window>
      <GlobalStyle />
      <TitleBar>
        <svg width="20" height="20" viewBox="0 0 20 20">
          <circle cx="10" cy="10" r="10" fill="#5aa02c" />
          <circle cx="10" cy="9" r="8" fill="#eee" />
          <text x="10" y="13" fontSize="10" fontWeight="700" fontFamily={FONT} textAnchor="middle" fill="#1b5e20">HS</text>
        </svg>
        <TitleText>profert\new_profert\order\ - HeidiSQL 12.1.0.6537</TitleText>
        <WinButtons>
          <svg width="16" height="17" viewBox="0 0 16 17"><rect y="8" width="16" height="1" fill="#222" /></svg>
          <svg width="16" height="17" viewBox="0 0 16 17" fill="none" stroke="#222"><rect x="1" y="4" width="11" height="12" rx="2" /><path d="M4 2h8a3 3 0 0 1 3 3v8" /></svg>
          <svg width="16" height="17" viewBox="0 0 16 17" stroke="#222"><path d="M1 1l14 15M15 1L1 16" /></svg>
        </WinButtons>
      </TitleBar>

      <MenuBar>
        {MENU.map((m, i) => <MenuItem key={m} $first={i === 0}>{m}</MenuItem>)}
      </MenuBar>

      <ToolArea>
        <ToolBar>
          <Grip />
          {TOOLS.map((t, i) => (t.sep
            ? <ToolSep key={i} $w={t.sep} />
            : <ToolButton key={i} $w={t.w} $active={t.active}>{t.icon}</ToolButton>))}
        </ToolBar>
        <DonateWrap>
          <Grip $w={17} />
          <DonateButton>Donate</DonateButton>
        </DonateWrap>
      </ToolArea>

      <Body>
        <LeftPane>
          <FilterBar>
            <FilterField $w={177} $muted>
              <FilterIcon><Funnel inner="db" /></FilterIcon>
              <FilterText>Database filter</FilterText>
            </FilterField>
            <FilterField $w={179}>
              <FilterIcon><Funnel inner="table" /></FilterIcon>
              <FilterText>or</FilterText>
              <svg width="24" height="14" viewBox="0 0 24 14">
                <path d="M6 0H24V14H6L0 7Z" fill="#e53935" />
                <path d="M11 4l6 6M17 4l-6 6" stroke="#fff" strokeWidth="2" />
              </svg>
            </FilterField>
            <StarBox>
              <svg width="24" height="23" viewBox="0 0 24 23"><path d="M12 0l3.6 7.7 8.4 1-6.2 5.8 1.6 8.3L12 18.7l-7.4 4.1 1.6-8.3L0 8.7l8.4-1z" fill="#ffc107" /></svg>
            </StarBox>
          </FilterBar>
          <TreeWrap>
            <Tree>
              <TreeRow $indent={7} $bold>
                <TreeChevron />
                <TreeIcon $w={26} $mr={6}><Dolphin /></TreeIcon>
                <TreeName>profert</TreeName>
                <TreeSize $dark>1.4 MiB</TreeSize>
              </TreeRow>
              <TreeRow $indent={25} $bold>
                <TreeChevron />
                <TreeIcon $w={26} $mr={6}><DbIcon ok /></TreeIcon>
                <TreeName>new_profert</TreeName>
                <TreeSize $dark>1.4 MiB</TreeSize>
              </TreeRow>
              {TABLES.map(t => (
                <TreeRow key={t.name} $indent={62} $leaf $selected={t.selected} $bold={t.selected}>
                  <TreeIcon><TableIcon tone={t.tone} /></TreeIcon>
                  <TreeName>{t.name}</TreeName>
                  <SizeBar $wide={!!t.size} />
                  <TreeSize>{t.size || '16.0 KiB'}</TreeSize>
                </TreeRow>
              ))}
              <TreeRow $indent={62} $leaf $last>
                <TreeIcon><EyeIcon /></TreeIcon>
                <TreeName>vw_comman_orders</TreeName>
              </TreeRow>
            </Tree>
            <TreeStrip />
          </TreeWrap>
        </LeftPane>

        <RightPane>
          <MainTabs>
            <MainTab $w={182} $pl={10} $gap={12}><HostIcon />Host: 13.201.45.0</MainTab>
            <MainTab $w={216} $pl={5} $gap={6}><DbIcon />Database: new_profert</MainTab>
            <MainTab $w={137} $active $gap={6}><TableIcon />Table: order</MainTab>
            <MainTab $w={77} $pl={5} $gap={7}><DataIcon />Data</MainTab>
            <MainTab $w={96} $pl={6} $gap={7}><Play />Query*</MainTab>
            <AddTab><NewQueryIcon /></AddTab>
          </MainTabs>

          <Content>
            <SubTabs>
              <SubTab $w={84} $pl={8} $gap={7} $active><TableIcon />Basic</SubTab>
              <SubTab $w={105} $pl={5}><WrenchIcon />Options</SubTab>
              <SubTab $w={126} $pl={11} $gap={13}><BoltIcon />Indexes (1)</SubTab>
              <SubTab $w={167} $pl={8}><ForeignIcon />Foreign keys (0)</SubTab>
              <SubTab $w={205} $gap={7}><CheckCircle />Check constraints (0)</SubTab>
              <SubTab $w={115} $gap={7}><PieIcon />Partitions</SubTab>
              <SubTab $w={146}><CodeIcon />CREATE code</SubTab>
              <SubTab $w={133}><CodeIcon />ALTER code</SubTab>
            </SubTabs>
            <TabPage>
              <FormRow>
                <FormLabel>Name:</FormLabel>
                <NameInput>order</NameInput>
              </FormRow>
              <FormRow>
                <FormLabel>Comment:</FormLabel>
                <Memo>
                  <MemoScroll>
                    <Arrow $up $s={5.5} $h={7} />
                    <Arrow $s={5.5} $h={7} />
                  </MemoScroll>
                </Memo>
              </FormRow>
            </TabPage>
            <Splitter />
            <ColumnsBar>
              <ColumnsLabel>Columns:</ColumnsLabel>
              <ColAction $w={99}><CircleIcon color="#4caf50" kind="plus" />Add</ColAction>
              <ColAction $w={99} $off><CircleIcon color="#616161" kind="x" />Remove</ColAction>
              <ColAction $w={99} $off><Arrow $up $s={12} $h={14} $color="#8a8a8a" />Up</ColAction>
              <ColAction $w={90} $off><Arrow $s={12} $h={14} $color="#8a8a8a" />Down</ColAction>
            </ColumnsBar>
            <Grid>
              <HeadRow>
                <HeadCell $end>#</HeadCell>
                {HEADERS.map(h => <HeadCell key={h}>{h}</HeadCell>)}
              </HeadRow>
              {ROWS.map((r, i) => (
                <DataRow key={r.name} $bold={r.bold}>
                  <Gutter>
                    {r.bold && <KeyBadge><Key /></KeyBadge>}
                    {i + 1}
                  </Gutter>
                  <Cell>{r.name}</Cell>
                  <Cell $color={TYPE_COLORS[r.type]}>{r.type}</Cell>
                  <Cell>{r.len}</Cell>
                  {r.boxes.map((b, j) => <Cell key={j} $center><Box tone={b} /></Cell>)}
                  <Cell $color={r.def.color}>{r.def.text}</Cell>
                  <Cell />
                  <Cell>{r.coll}</Cell>
                  <Cell />
                </DataRow>
              ))}
              <HScroll><HThumb /></HScroll>
            </Grid>
            <Footer>
              <FootButton>Help</FootButton>
              <FootButton $off>Discard</FootButton>
              <FootButton $off>Save</FootButton>
            </Footer>
          </Content>
        </RightPane>
      </Body>
    </Window>
  );
}

export default App;
